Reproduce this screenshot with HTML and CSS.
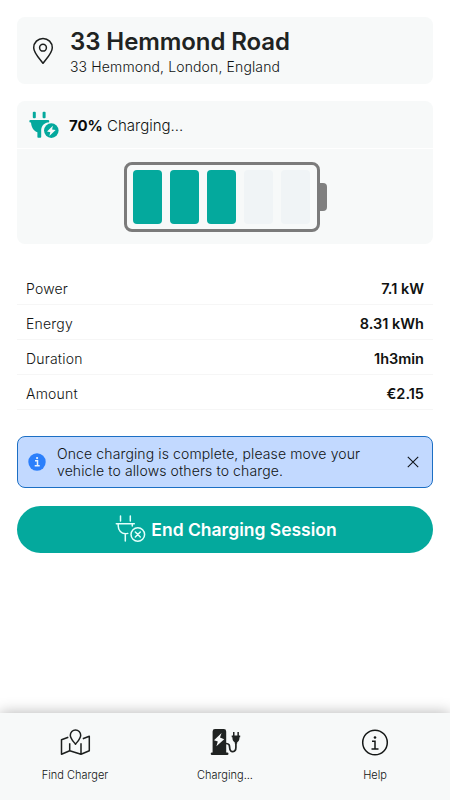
FILE: index.html
```html
<!DOCTYPE html>
<html lang="en">
<head>
  <meta charset="UTF-8" />
  <meta name="viewport" content="width=device-width, initial-scale=1.0"/>
  <title>Charging Session</title>
  <link rel="stylesheet" href="styles.css">
</head>
<body>
  <main class="content">
    <!-- Location -->
    <section class="card location">
      <svg class="pin-icon" width="22" height="28" viewBox="0 0 22 28" fill="none" stroke="#1c1f1e" stroke-width="1.5">
        <path d="M11 26.3C8.5 22.8 1.7 16 1.7 10.7a9.3 9.3 0 0 1 18.6 0C20.3 16 13.5 22.8 11 26.3z" stroke-linejoin="round"/>
        <circle cx="11" cy="10.7" r="3.4"/>
      </svg>
      <div>
        <h1>33 Hemmond Road</h1>
        <p class="address">33 Hemmond, London, England</p>
      </div>
    </section>

    <!-- Charging status -->
    <section class="card">
      <div class="status">
        <svg class="plug-icon" width="31" height="28" viewBox="0 0 31 28" fill="#04a99d">
          <rect x="3.8" y="0.8" width="3" height="6.4" rx="1"/>
          <rect x="13.6" y="0.8" width="3" height="6.4" rx="1"/>
          <path d="M1.5 9h17.600a.9.9 0 0 1 0 2.400h-.8c-4 1-6.300 4.300-6.100 8.300v6.300a.8.8 0 0 1-.8.800H9.200a.8.8 0 0 1-.8-.8v-4.800C5 20 2.300 16.600 2 11.400h-.5a1.200 1.200 0 0 1 0-2.400z"/>
          <circle cx="22.3" cy="19.6" r="7.3"/>
          <path d="M23.9 14.7l-5.900 5.700 3.300.8-.9 3.800 6.200-5.900-3.500-.7z" fill="#f7f9f9"/>
        </svg>
        <p><strong>70%</strong> Charging...</p>
      </div>
      <div class="battery-wrap">
        <div class="battery">
          <span class="cell full"></span>
          <span class="cell full"></span>
          <span class="cell full"></span>
          <span class="cell"></span>
          <span class="cell"></span>
        </div>
        <div class="battery-tip"></div>
      </div>
    </section>

    <!-- Session details -->
    <dl class="details">
      <div class="row"><dt>Power</dt><dd>7.1 kW</dd></div>
      <div class="row"><dt>Energy</dt><dd>8.31 kWh</dd></div>
      <div class="row"><dt>Duration</dt><dd>1h3min</dd></div>
      <div class="row"><dt>Amount</dt><dd>€2.15</dd></div>
    </dl>

    <!-- Notice -->
    <div class="notice">
      <svg width="18" height="18" viewBox="0 0 18 18">
        <circle cx="9" cy="9" r="8.7" fill="#2b7ffb"/>
        <path d="M7 7.7h2.500v5M6.700 12.700h5" fill="none" stroke="#e6f1ff" stroke-width="1.5"/>
        <circle cx="9.1" cy="5.1" r="1.1" fill="#e6f1ff"/>
      </svg>
      <p>Once charging is complete, please move your vehicle to allows others to charge.</p>
      <button class="close" aria-label="Close">
        <svg width="12" height="12" viewBox="0 0 12 12" fill="none" stroke="#10151c" stroke-width="1.1">
          <path d="M.8.8l10.400 10.400M11.200.8L.8 11.200"/>
        </svg>
      </button>
    </div>

    <button class="end-button">
      <svg width="31" height="28" viewBox="0 0 31 28" fill="none" stroke="#e4fffb" stroke-width="1.5" stroke-linecap="round">
        <path d="M5.500 1v5M15.300 1v5M1.300 8.700h18M3.200 9v1.800c0 4.800 3.300 7.700 7 8 .9 0 1.800-.1 2.600-.4M17.300 9v2M10.300 19v7"/>
        <circle cx="22.8" cy="19.5" r="6.8"/>
        <path d="M20.300 17l5 5M25.300 17l-5 5"/>
      </svg>
      <span>End Charging Session</span>
    </button>
  </main>

  <!-- Bottom navigation -->
  <nav class="navbar">
    <a class="nav-item">
      <svg width="32" height="28" viewBox="0 0 32 28" fill="none" stroke="#1c1f1e" stroke-width="1.5" stroke-linejoin="round">
        <path d="M16.500 16.200c-1.800-2.500-5.200-5.600-5.200-9a5.200 5.200 0 0 1 10.400 0c0 3.400-3.400 6.500-5.200 9z"/>
        <path d="M9.300 9.200L2.500 11.800v14.500l8.200-3.500 11.300 3.500 8.300-3.500V8.300l-6.500 2.500M10.700 15.300v7.500M22 15.300v11"/>
      </svg>
      <span>Find Charger</span>
    </a>
    <a class="nav-item">
      <svg width="32" height="28" viewBox="0 0 32 28" fill="#202322">
        <path d="M6 1h8.800a2.400 2.400 0 0 1 2.400 2.400v21h1a1.200 1.200 0 0 1 0 2.600H3a1.200 1.200 0 0 1 0-2.600h.6v-21A2.400 2.400 0 0 1 6 1z"/>
        <path d="M12.600 5L5 12.200l3.800 1.300-1.400 4.700 7.800-7-4.200-1.600z" fill="#f7f9f9"/>
        <path d="M17 15.500c3.500 0 3.500 2 3.700 4.500.2 5.300 6.200 4.500 6.200-.5v-5" fill="none" stroke="#202322" stroke-width="1.7"/>
        <path d="M24 4h1.500v3.500h2.900V4h1.500v3.500h1.300v1.800h-.7c0 3-.8 4.300-2.300 4.900v1.300h-2.500v-1.300c-1.500-.6-2.300-1.900-2.300-4.900h-.7V7.500H24z"/>
      </svg>
      <span>Charging...</span>
    </a>
    <a class="nav-item">
      <svg width="32" height="28" viewBox="0 0 32 28" fill="none" stroke="#141716" stroke-width="1.5">
        <circle cx="16" cy="14.5" r="12.3"/>
        <path d="M13 13.200h3v7.800M12.500 21h7"/>
        <circle cx="16" cy="9.5" r="1.3" fill="#141716" stroke="none"/>
      </svg>
      <span>Help</span>
    </a>
  </nav>
</body>
</html>
```
FILE: styles.css
```css
* {
  box-sizing: border-box;
}

body {
  margin: 0;
  height: 800px;
  display: flex;
  flex-direction: column;
  justify-content: space-between;
  overflow: hidden;
  background-color: #ffffff;
  color: #101312;
  font-family: Inter, "Liberation Sans", sans-serif;
  font-weight: 300;
}

h1, p, dl, dd {
  margin: 0;
}

button {
  border: none;
  padding: 0;
  font-family: inherit;
  color: inherit;
  cursor: pointer;
}

svg {
  flex-shrink: 0;
}

.content {
  display: flex;
  flex-direction: column;
  padding: 17px 17px 0;
}

.card {
  background-color: #f7f9f9;
  border-radius: 8px;
  margin-bottom: 17px;
}

/* Location */
.location {
  display: flex;
  align-items: center;
  height: 67px;
  padding: 0 15px;
}

.pin-icon {
  margin-right: 16px;
}

h1 {
  padding-top: 4px;
  color: #202322;
  font-size: 24px;
  line-height: 28px;
  font-weight: 600;
  letter-spacing: -0.08px;
}

.address {
  font-size: 14px;
  line-height: 21px;
  letter-spacing: 0.13px;
}

/* Charging status */
.status {
  display: flex;
  align-items: center;
  height: 48px;
  padding-left: 12px;
  border-bottom: 1px solid #ffffff;
  font-size: 15px;
}

.status p {
  padding-top: 1px;
}

.status strong {
  color: #0a0c0b;
  font-weight: 700;
}

.plug-icon {
  margin-right: 9px;
}

.battery-wrap {
  display: flex;
  align-items: center;
  height: 95px;
  padding-left: 107px;
}

.battery {
  display: flex;
  align-items: center;
  gap: 8px;
  width: 196px;
  height: 70px;
  padding: 0 6px;
  border: 3px solid #7b7b7b;
  border-radius: 8px;
}

.cell {
  width: 29px;
  height: 54px;
  border-radius: 4px;
  background-color: #f0f4f6;
}

.cell.full {
  background-color: #04a99d;
}

.battery-tip {
  width: 7px;
  height: 28px;
  border-radius: 0 4px 4px 0;
  background-color: #808080;
}

/* Session details */
.details {
  margin-top: 9px;
}

.row {
  display: flex;
  justify-content: space-between;
  align-items: center;
  height: 34.9px;
  padding: 3px 9px 0;
  border-bottom: 1px solid #f6f6f6;
  font-size: 14px;
}

dt {
  letter-spacing: 0.2px;
}

dd {
  color: #101211;
  font-size: 14.5px;
  font-weight: 600;
}

/* Notice */
.notice {
  display: flex;
  align-items: center;
  height: 52px;
  margin-top: 26px;
  padding: 0 13px 0 10px;
  border: 1px solid #1c6fc4;
  border-radius: 8px;
  background-color: #c2d9ff;
}

.notice p {
  width: 320px;
  padding-top: 1px;
  margin-left: 11px;
  font-size: 14px;
  line-height: 17.5px;
  letter-spacing: 0.12px;
}

.close {
  display: flex;
  margin-left: auto;
  background: none;
}

/* End session */
.end-button {
  display: flex;
  justify-content: center;
  align-items: center;
  gap: 5px;
  height: 47px;
  margin-top: 18px;
  padding-left: 2px;
  border-radius: 24px;
  background-color: #04a99d;
  color: #ffffff;
  font-size: 17.5px;
  font-weight: 600;
}

/* Bottom navigation */
.navbar {
  display: flex;
  height: 87px;
  background-color: #f7f9f9;
  box-shadow: 0 0 14px rgba(0, 0, 0, 0.3);
}

.nav-item {
  flex: 1;
  display: flex;
  flex-direction: column;
  align-items: center;
  padding-top: 15px;
  font-size: 11px;
}

.nav-item span {
  margin-top: 12px;
}
```
